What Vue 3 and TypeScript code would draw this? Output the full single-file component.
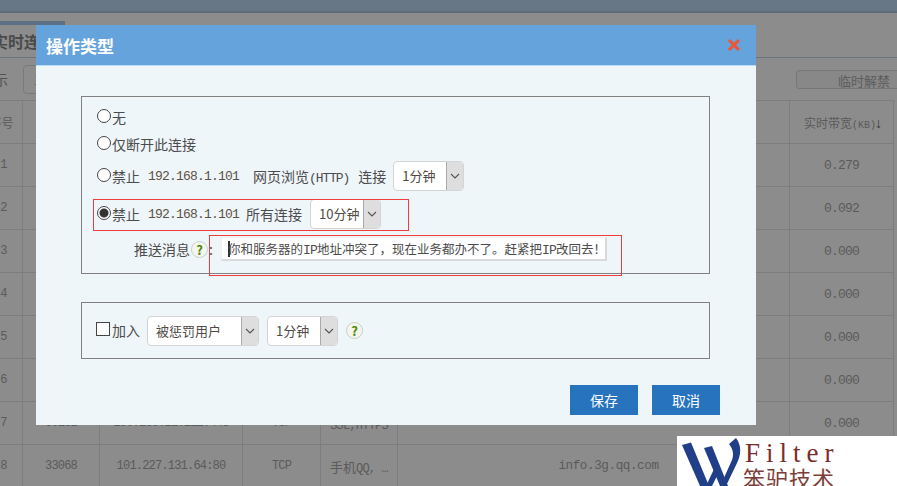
<template>
  <div class="page">
    <div class="topbar"></div>
    <div class="tabs"><div class="tab">实时连接</div></div>
    <div class="toolbar">
      <span class="show">显示</span>
      <span class="filter">1</span>
      <span class="unban">临时解禁</span>
    </div>

    <table class="grid">
      <colgroup>
        <col v-for="(w, i) in colWidths" :key="i" :style="{ width: w + 'px' }" />
      </colgroup>
      <thead>
        <tr>
          <th class="no-head">序号</th><th></th><th></th><th></th><th></th><th></th>
          <th>实时带宽<span class="kb">(KB)</span><span class="sort">↓</span></th>
        </tr>
      </thead>
      <tbody>
        <tr v-for="row in rows" :key="row.no">
          <td class="mono">{{ row.no }}</td>
          <td class="mono">{{ row.port }}</td>
          <td class="mono">{{ row.addr }}</td>
          <td class="mono">{{ row.proto }}</td>
          <td class="mono"><span class="cn">{{ row.cn }}</span>{{ row.app }}</td>
          <td class="mono host">{{ row.host }}</td>
          <td class="mono speed">{{ row.speed }}</td>
        </tr>
      </tbody>
    </table>

    <div class="backdrop"></div>

    <div class="dialog">
      <div class="dialog-head">
        <span class="dialog-title">操作类型</span>
        <svg class="close" width="14" height="14" viewBox="0 0 14 14">
          <path d="M2 2 L12 12 M12 2 L2 12" stroke="#ef5434" stroke-width="3" fill="none" />
        </svg>
      </div>

      <div class="dialog-body">
        <div class="box box-action">
          <div class="line"><i class="radio"></i><span>无</span></div>
          <div class="line"><i class="radio"></i><span>仅断开此连接</span></div>
          <div class="line tall">
            <i class="radio"></i><span>禁止</span>
            <span class="mono ip">192.168.1.101</span>
            <span class="after-ip">网页浏览<span class="mono http">(HTTP)</span></span>
            <span class="conn">连接</span>
            <div class="select sel-time">
              <span class="select-text">1分钟</span>
              <span class="select-arrow"><svg width="10" height="6" viewBox="0 0 10 6"><path d="M1 1 L5 5 L9 1" stroke="#555" stroke-width="1.1" fill="none" /></svg></span>
            </div>
          </div>
          <div class="line tall">
            <i class="radio on"></i><span>禁止</span>
            <span class="mono ip">192.168.1.101</span>
            <span class="all-conn">所有连接</span>
            <div class="select sel-time">
              <span class="select-text">10分钟</span>
              <span class="select-arrow"><svg width="10" height="6" viewBox="0 0 10 6"><path d="M1 1 L5 5 L9 1" stroke="#555" stroke-width="1.1" fill="none" /></svg></span>
            </div>
          </div>
          <div class="line msg">
            <span>推送消息</span>
            <span class="help">?</span>
            <span class="colon">:</span>
            <div class="msg-input"><i class="caret"></i>你和服务器的<span class="mono">IP</span>地址冲突了，现在业务都办不了。赶紧把<span class="mono">IP</span>改回去！</div>
          </div>
        </div>

        <div class="box box-join">
          <i class="check"></i><span class="join">加入</span>
          <div class="select sel-group">
            <span class="select-text">被惩罚用户</span>
            <span class="select-arrow"><svg width="10" height="6" viewBox="0 0 10 6"><path d="M1 1 L5 5 L9 1" stroke="#555" stroke-width="1.1" fill="none" /></svg></span>
          </div>
          <div class="select sel-time">
            <span class="select-text">1分钟</span>
            <span class="select-arrow"><svg width="10" height="6" viewBox="0 0 10 6"><path d="M1 1 L5 5 L9 1" stroke="#555" stroke-width="1.1" fill="none" /></svg></span>
          </div>
          <span class="help join-help">?</span>
        </div>

        <div class="actions">
          <button class="btn">保存</button>
          <button class="btn">取消</button>
        </div>
      </div>
    </div>

    <!-- red marks drawn on the screenshot -->
    <div class="mark mark-a"></div>
    <div class="mark mark-b"></div>

    <div class="logo">
      <svg class="logo-w" width="66" height="50" viewBox="0 0 66 50">
        <path d="M5 9 L14 6.5 L32 50 L23 50 Z" fill="#213f88" />
        <path d="M27 12 L35 10 L51 50 L43 50 Z" fill="#213f88" />
        <path d="M29 50 L38 31 L41 38 L35 50 Z" fill="#213f88" />
        <path d="M52 8 L59 2 C65 10 64 19 60 27 L49 50 L46 44 L55 24 C57 18 56 13 52 8 Z" fill="#213f88" />
      </svg>
      <div class="logo-text">
        <div class="logo-en">Filter</div>
        <div class="logo-cn">笨驴技术</div>
      </div>
    </div>
  </div>
</template>

<script setup lang="ts">
const colWidths = [38, 77, 143, 78, 77, 392, 104, 20]

const rows = [
  { no: 1, port: '', addr: '', proto: '', cn: '', app: '', host: '', speed: '0.279' },
  { no: 2, port: '', addr: '', proto: '', cn: '', app: '', host: '', speed: '0.092' },
  { no: 3, port: '', addr: '', proto: '', cn: '', app: '', host: '', speed: '0.000' },
  { no: 4, port: '', addr: '', proto: '', cn: '', app: '', host: '', speed: '0.000' },
  { no: 5, port: '', addr: '', proto: '', cn: '', app: '', host: '', speed: '0.000' },
  { no: 6, port: '', addr: '', proto: '', cn: '', app: '', host: '', speed: '0.000' },
  { no: 7, port: '60162', addr: '180.168.21.111:443', proto: 'TCP', cn: '', app: 'SSL,HTTPS', host: '', speed: '0.000' },
  { no: 8, port: '33068', addr: '101.227.131.64:80', proto: 'TCP', cn: '手机', app: 'QQ, …', host: 'info.3g.qq.com', speed: '0.000' },
]
</script>

<style>
html, body { margin: 0; overflow: hidden; }
</style>

<style scoped>
.page {
  position: relative;
  width: 897px;
  height: 486px;
  overflow: hidden;
  background: #fff;
  font-family: "Noto Sans CJK SC", sans-serif;
  font-size: 14px;
  color: #4c4c4c;
}

.mono {
  font-family: "Liberation Mono", "Noto Sans CJK SC", monospace;
  font-size: 13px;
  letter-spacing: -0.8px;
}
.http { letter-spacing: -1.1px; }

.topbar {
  height: 11px;
  background: #bcd9f5;
  border-bottom: 2px solid #a9c3dc;
}

.tabs {
  height: 36px;
  padding-top: 8px;
  border-bottom: 1px solid #bcd5ee;
}
.tab {
  box-sizing: border-box;
  width: 82px;
  margin-left: -17px;
  height: 36px;
  line-height: 33px;
  padding-left: 9px;
  border-top: 4px solid #a6cdf0;
  font-size: 16px;
  font-weight: bold;
  color: #888;
  white-space: nowrap;
  overflow: hidden;
}

.toolbar {
  height: 42px;
  display: flex;
  align-items: center;
  color: #999;
}
.show { margin-left: -20px; width: 43px; }
.filter {
  width: 60px;
  height: 27px;
  line-height: 27px;
  padding-left: 10px;
  border: 1px solid #dcdcdc;
  border-radius: 4px;
}
.unban {
  margin-left: auto;
  margin-right: -10px;
  box-sizing: border-box;
  width: 111px;
  height: 19px;
  line-height: 19px;
  padding-right: 16px;
  text-align: right;
  border: 1px solid #d8d8d8;
  border-radius: 3px;
  background: #f7f7f7;
  font-size: 13px;
  color: #aaa;
}

.grid {
  table-layout: fixed;
  border-collapse: collapse;
  margin-left: -16px;
  width: 929px;
  text-align: center;
}
.grid th, .grid td {
  height: 42px;
  padding: 0;
  border: 1px solid #e4e4e4;
  font-weight: normal;
  font-size: 12px;
  color: #a6a6a6;
  white-space: nowrap;
  overflow: hidden;
}
.grid td.mono { font-size: 12px; }
.grid td.speed { font-size: 13px; }
.grid td.host { padding-left: 30px; font-size: 12.6px; letter-spacing: -0.4px; }
.grid th.no-head { padding-right: 4px; }
.cn {
  font-family: "Noto Sans CJK SC", sans-serif;
  font-size: 13px;
  letter-spacing: 0;
}
.kb {
  font-family: "Liberation Mono", monospace;
  font-size: 10px;
}
.sort {
  margin: 0 -3px 0 -1px;
  font-family: "Liberation Sans", sans-serif;
  font-size: 14px;
  color: #666;
}

.backdrop {
  position: absolute;
  inset: 0;
  background: rgba(0, 0, 0, 0.45);
}

.dialog {
  position: absolute;
  left: 36px;
  top: 25px;
  width: 720px;
  height: 400px;
  background: #eff6fa;
  display: flex;
  flex-direction: column;
}
.dialog-head {
  height: 40px;
  flex: none;
  background: #65a3dd;
  border-bottom: 1px solid #b8dcf6;
  display: flex;
  align-items: center;
  justify-content: space-between;
  padding: 0 15px 0 10px;
}
.dialog-title {
  color: #fff;
  font-size: 17px;
  font-weight: bold;
}

.dialog-body {
  flex: 1;
  padding: 30px 36px 0 45px;
  display: flex;
  flex-direction: column;
}

.box {
  width: 629px;
  box-sizing: border-box;
  border: 1px solid #808080;
  padding-left: 14px;
}
.box-action {
  height: 178px;
  padding-top: 6px;
}
.box-join {
  height: 57px;
  margin-top: 28px;
  display: flex;
  align-items: center;
}

.line {
  height: 27px;
  display: flex;
  align-items: center;
}
.line.tall { height: 38px; }
.line.msg { height: 32px; padding-left: 38px; }

.radio {
  width: 12px;
  height: 12px;
  margin: -2px 1px 0 1px;
  flex: none;
  border: 1px solid #444;
  border-radius: 50%;
  background: #fff;
}
.radio.on {
  background: radial-gradient(circle, #333 0, #333 4px, #fff 5px);
}
.check {
  width: 12px;
  height: 12px;
  margin-top: -3px;
  flex: none;
  border: 1px solid #444;
  background: #fff;
}

.ip { margin-left: 8px; color: #5c5244; }
.after-ip { margin-left: 14px; }
.conn { margin-left: 9px; margin-right: -1px; }
.all-conn { margin-left: 7px; }

.select {
  flex: none;
  height: 30px;
  box-sizing: border-box;
  display: flex;
  align-items: stretch;
  background: #fff;
  border: 1px solid #d4d4d4;
  border-radius: 4px;
  overflow: hidden;
}
.sel-time { width: 71px; margin-left: 8px; }
.sel-group { width: 112px; margin-left: 7px; }
.select-text {
  flex: 1;
  padding-left: 8px;
  line-height: 27px;
  font-size: 13px;
  color: #4f4a44;
  white-space: nowrap;
}
.select-arrow {
  width: 16px;
  flex: none;
  display: flex;
  align-items: center;
  justify-content: center;
  background: #dedede;
  border-left: 1px solid #aaa;
}

.join { margin-left: 2px; margin-top: -2px; }

.help {
  width: 15px;
  height: 15px;
  margin-left: 1px;
  flex: none;
  display: flex;
  align-items: center;
  justify-content: center;
  border: 1px solid #c9cfc9;
  border-radius: 50%;
  background: #f4f5ef;
  color: #4e8a00;
  font-size: 13px;
  font-weight: bold;
  line-height: 1;
}
.join-help { margin-left: 8px; }
.colon { margin-left: 1px; width: 12px; }

.msg-input {
  position: relative;
  width: 386px;
  height: 24px;
  box-sizing: border-box;
  padding-left: 6px;
  background: #fff;
  border: 1px solid #f0f0f0;
  border-bottom: 2px solid #d8dade;
  border-right: 2px solid #d8dade;
  font-size: 12.5px;
  line-height: 21px;
  white-space: nowrap;
  overflow: hidden;
}
.caret {
  display: inline-block;
  width: 2px;
  height: 16px;
  margin-right: -2px;
  vertical-align: -3px;
  background: #333;
}

.actions {
  margin-top: 26px;
  display: flex;
  justify-content: flex-end;
  gap: 14px;
}
.btn {
  width: 68px;
  height: 30px;
  padding: 0;
  border: none;
  background: #2873bd;
  color: #fff;
  font-family: inherit;
  font-size: 14px;
}

.mark {
  position: absolute;
  box-sizing: border-box;
  border: 1px solid #f23b3b;
}
.mark-a { left: 93px; top: 199px; width: 316px; height: 32px; }
.mark-b { left: 209px; top: 235px; width: 413px; height: 41px; }

.logo {
  position: absolute;
  left: 677px;
  top: 436px;
  width: 220px;
  height: 50px;
  background: #fff;
  overflow: hidden;
  display: flex;
}
.logo-w { flex: none; }
.logo-en {
  height: 26px;
  margin: 4px 0 0 2px;
  font-family: "Liberation Serif", serif;
  font-size: 27px;
  line-height: 26px;
  letter-spacing: 6px;
  color: #7c2d28;
}
.logo-cn {
  font-size: 22px;
  line-height: 20px;
  padding-top: 1px;
  letter-spacing: 1px;
  color: #7c3f3a;
  white-space: nowrap;
}
</style>
